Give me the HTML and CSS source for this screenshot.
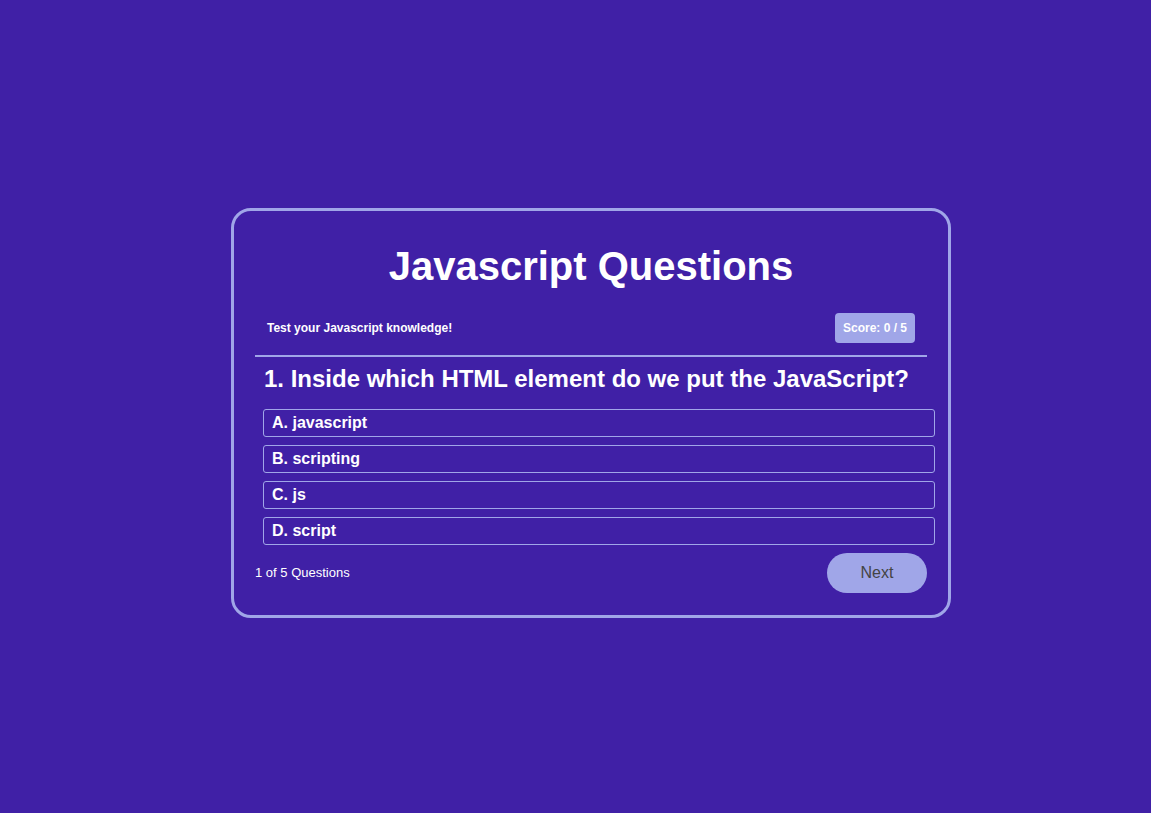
FILE: index.html
```html
<!DOCTYPE html>
<html>
<head>
<meta charset="utf-8">
<link rel="stylesheet" href="styles.css">
</head>
<body>
<div class="page">
  <div class="card">
    <h1 class="title">Javascript Questions</h1>
    <div class="header">
      <span class="tagline">Test your Javascript knowledge!</span>
      <span class="score">Score: 0 / 5</span>
    </div>
    <div class="divider"></div>
    <h2 class="question">1. Inside which HTML element do we put the JavaScript?</h2>
    <ul class="options">
      <li class="option">A. javascript</li>
      <li class="option">B. scripting</li>
      <li class="option">C. js</li>
      <li class="option">D. script</li>
    </ul>
    <div class="footer">
      <span class="count">1 of 5 Questions</span>
      <button class="next">Next</button>
    </div>
  </div>
</div>
</body>
</html>
```

FILE: styles.css
```css
html, body {
  margin: 0;
  padding: 0;
  height: 100%;
}
body {
  background: #4020a6;
  font-family: "Liberation Sans", Arial, sans-serif;
  color: #ffffff;
}
.page {
  box-sizing: border-box;
  height: 100%;
  padding: 12px 0 0 31px;
  display: flex;
  align-items: center;
  justify-content: center;
}
.card {
  box-sizing: border-box;
  width: 720px;
  height: 410px;
  border: 3px solid #a0a6e8;
  border-radius: 20px;
  padding: 27px 21px 0 21px;
  display: flex;
  flex-direction: column;
}
.title {
  margin: 0;
  font-size: 40px;
  line-height: 56px;
  font-weight: bold;
  text-align: center;
}
.header {
  margin-top: 19px;
  display: flex;
  align-items: center;
  justify-content: space-between;
  padding: 0 12px;
}
.tagline {
  font-size: 12px;
  font-weight: bold;
}
.score {
  background: #a0a6e8;
  border-radius: 4px;
  font-size: 12px;
  font-weight: bold;
  padding: 8px 8px;
  line-height: 14px;
}
.divider {
  margin-top: 12px;
  height: 2px;
  background: #a0a6e8;
}
.question {
  margin: 8px 0 0 9px;
  font-size: 24px;
  line-height: 28px;
  font-weight: bold;
}
.options {
  list-style: none;
  width: 100%;
  margin: 16px 0 0 8px;
  padding: 0;
  display: flex;
  flex-direction: column;
  gap: 8px;
}
.option {
  box-sizing: border-box;
  height: 28px;
  border: 1px solid #a0a6e8;
  border-radius: 3px;
  padding: 0 8px;
  font-size: 16px;
  font-weight: bold;
  line-height: 26px;
}
.footer {
  margin-top: 8px;
  display: flex;
  align-items: center;
  justify-content: space-between;
}
.count {
  font-size: 13px;
}
.next {
  width: 100px;
  height: 40px;
  border: none;
  border-radius: 20px;
  background: #a0a6e8;
  color: #444444;
  font-family: "Liberation Sans", Arial, sans-serif;
  font-size: 16px;
}
```
